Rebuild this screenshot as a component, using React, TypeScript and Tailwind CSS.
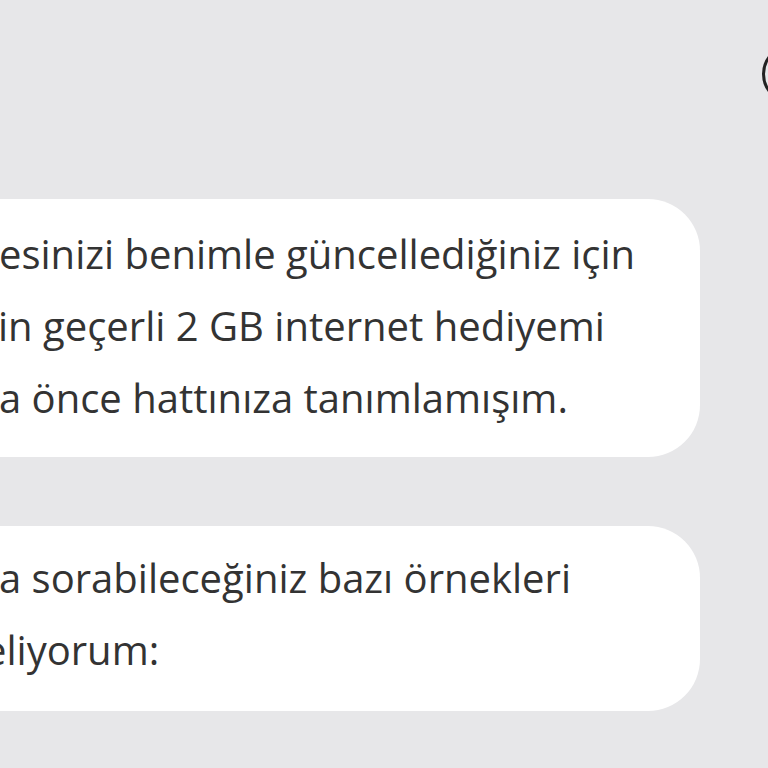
import React from "react";

export default function App() {
  const font = { fontFamily: '"Open Sans", "Liberation Sans", sans-serif' };
  return (
    <div className="w-[768px] h-[768px] bg-[#e7e7e9] overflow-hidden relative" style={font}>
      <div className="absolute left-[762px] top-[44px] w-[60px] h-[60px] rounded-full border-[3px] border-[#222]" />
      <div className="pt-[199px] flex flex-col gap-[69px]">
        <div className="w-[700px] h-[258px] bg-white rounded-r-[52px] overflow-hidden pt-[19px] text-[#333] text-[40px] leading-[72px] whitespace-nowrap">
          <div className="-ml-[1px]">esinizi benimle güncellediğiniz için</div>
          <div className="-ml-[2px]">in geçerli 2 GB internet hediyemi</div>
          <div className="-ml-[1px]">a önce hattınıza tanımlamışım.</div>
        </div>
        <div className="w-[700px] h-[185px] bg-white rounded-r-[52px] overflow-hidden pt-[16px] text-[#333] text-[40px] leading-[72px] whitespace-nowrap">
          <div className="-ml-[1px]">a sorabileceğiniz bazı örnekleri</div>
          <div className="-ml-[16px]">eliyorum:</div>
        </div>
      </div>
    </div>
  );
}
